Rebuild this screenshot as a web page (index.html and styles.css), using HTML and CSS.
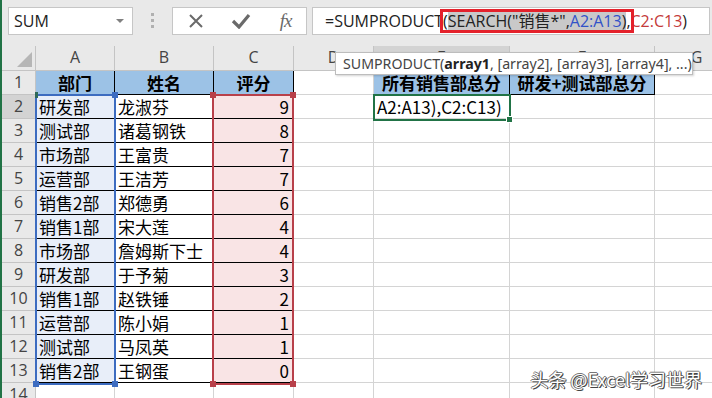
FILE: index.html
```html
<!DOCTYPE html>
<html lang="zh">
<head>
<meta charset="utf-8">
<link rel="stylesheet" href="styles.css">
</head>
<body>
<div class="app">
  <div class="fbar">
    <div class="namebox"><span>SUM</span><span class="caret"></span></div>
    <div class="grip"><i></i><i></i><i></i></div>
    <div class="btns">
      <span class="btn"><svg width="16" height="16" viewBox="0 0 16 16"><path d="M2 2 L14 14 M14 2 L2 14" stroke="#6a6a6a" stroke-width="2" fill="none"/></svg></span>
      <span class="btn"><svg width="20" height="16" viewBox="0 0 20 16"><path d="M2 8 L8 14 L18 2" stroke="#6a6a6a" stroke-width="3.2" fill="none"/></svg></span>
      <span class="btn fx">fx</span>
    </div>
    <div class="formula">=SUMPRODUCT(<span class="hl">SEARCH("销售*",<span class="ref-a">A2:A13</span>)</span>,<span class="ref-c">C2:C13</span>)</div>
  </div>

  <div class="sheet">
    <div class="c corner"><span class="tri"></span></div>
    <div class="c ch">A</div><div class="c ch">B</div><div class="c ch">C</div><div class="c ch">D</div><div class="c ch sel">E</div><div class="c ch">F</div><div class="c ch">G</div>

    <div class="c rh">1</div><div class="c hd">部门</div><div class="c hd">姓名</div><div class="c hd">评分</div><div class="c"></div><div class="c hd">所有销售部总分</div><div class="c hd">研发+测试部总分</div><div class="c"></div>

    <div class="c rh sel">2</div><div class="c a">研发部</div><div class="c b">龙淑芬</div><div class="c n">9</div><div class="c"></div><div class="c txt">A2:A13),C2:C13)</div><div class="c"></div><div class="c"></div>
    <div class="c rh">3</div><div class="c a">测试部</div><div class="c b">诸葛钢铁</div><div class="c n">8</div><div class="c"></div><div class="c"></div><div class="c"></div><div class="c"></div>
    <div class="c rh">4</div><div class="c a">市场部</div><div class="c b">王富贵</div><div class="c n">7</div><div class="c"></div><div class="c"></div><div class="c"></div><div class="c"></div>
    <div class="c rh">5</div><div class="c a">运营部</div><div class="c b">王洁芳</div><div class="c n">7</div><div class="c"></div><div class="c"></div><div class="c"></div><div class="c"></div>
    <div class="c rh">6</div><div class="c a">销售2部</div><div class="c b">郑德勇</div><div class="c n">6</div><div class="c"></div><div class="c"></div><div class="c"></div><div class="c"></div>
    <div class="c rh">7</div><div class="c a">销售1部</div><div class="c b">宋大莲</div><div class="c n">4</div><div class="c"></div><div class="c"></div><div class="c"></div><div class="c"></div>
    <div class="c rh">8</div><div class="c a">市场部</div><div class="c b">詹姆斯下士</div><div class="c n">4</div><div class="c"></div><div class="c"></div><div class="c"></div><div class="c"></div>
    <div class="c rh">9</div><div class="c a">研发部</div><div class="c b">于予菊</div><div class="c n">3</div><div class="c"></div><div class="c"></div><div class="c"></div><div class="c"></div>
    <div class="c rh">10</div><div class="c a">销售1部</div><div class="c b">赵铁锤</div><div class="c n">2</div><div class="c"></div><div class="c"></div><div class="c"></div><div class="c"></div>
    <div class="c rh">11</div><div class="c a">运营部</div><div class="c b">陈小娟</div><div class="c n">1</div><div class="c"></div><div class="c"></div><div class="c"></div><div class="c"></div>
    <div class="c rh">12</div><div class="c a">测试部</div><div class="c b">马凤英</div><div class="c n">1</div><div class="c"></div><div class="c"></div><div class="c"></div><div class="c"></div>
    <div class="c rh">13</div><div class="c a">销售2部</div><div class="c b">王钢蛋</div><div class="c n">0</div><div class="c"></div><div class="c"></div><div class="c"></div><div class="c"></div>
    <div class="c rh">14</div><div class="c"></div><div class="c"></div><div class="c"></div><div class="c"></div><div class="c"></div><div class="c"></div><div class="c"></div>

    <div class="range blue"><i class="h tl"></i><i class="h tr"></i><i class="h bl"></i><i class="h br"></i></div>
    <div class="range red"><i class="h tl"></i><i class="h tr"></i><i class="h bl"></i><i class="h br"></i></div>
    <div class="active"><i class="fill"></i></div>

    <div class="tip">SUMPRODUCT(<b>array1</b>, [array2], [array3], [array4], ...)</div>
  </div>

  <div class="wm">头条 @Excel学习世界</div>
</div>
</body>
</html>
```

FILE: styles.css
```css
body {
  margin: 0;
}

.app {
  position: relative;
  width: 712px;
  height: 398px;
  overflow: hidden;
  box-sizing: border-box;
  border-left: 2px solid #217346;
  background: #e9e9e9;
  font-family: "Noto Sans CJK SC", "Noto Sans", sans-serif;
}

/* formula bar */
.fbar {
  position: relative;
  height: 46px;
  box-sizing: border-box;
  display: flex;
  align-items: flex-start;
  padding: 7px 2px 0 6px;
}

.namebox {
  width: 125px;
  height: 28px;
  box-sizing: border-box;
  background: #fff;
  border: 1px solid #c6c6c6;
  display: flex;
  align-items: center;
  justify-content: space-between;
  padding: 0 8px 0 5px;
  font: 16px "Open Sans", sans-serif;
  color: #222;
}

.caret {
  width: 0;
  height: 0;
  border-left: 4px solid transparent;
  border-right: 4px solid transparent;
  border-top: 4px solid #808080;
}

.grip {
  width: 39px;
  display: flex;
  flex-direction: column;
  align-items: center;
  gap: 3px;
  padding-top: 6px;
}

.grip i {
  display: block;
  width: 3px;
  height: 3px;
  background: #b0b0b0;
}

.btns {
  width: 135px;
  height: 28px;
  box-sizing: border-box;
  background: #fff;
  border: 1px solid #c6c6c6;
  display: grid;
  grid-template-columns: 45px 45px 45px;
}

.btn {
  display: flex;
  align-items: center;
  justify-content: center;
}

.fx {
  font: italic 19px "Liberation Serif", serif;
  color: #6a6a6a;
  letter-spacing: -1px;
}

.formula {
  margin-left: 5px;
  flex: 1;
  height: 28px;
  box-sizing: border-box;
  background: #fff;
  border: 1px solid #c6c6c6;
  padding-left: 12px;
  font: 16px "Open Sans", "Noto Sans CJK SC", sans-serif;
  line-height: 26px;
  color: #222;
  white-space: nowrap;
}

.hl {
  position: relative;
  background: #c9c9c9;
}

.hl::after {
  content: "";
  position: absolute;
  left: -8px;
  right: -8px;
  top: -1px;
  bottom: -1px;
  border: 3px solid #e4212b;
}

.ref-a {
  color: #3152c8;
}

.ref-c {
  color: #c43a3a;
}

/* sheet */
.sheet {
  position: relative;
  display: grid;
  grid-template-columns: 34px 79px 99px 80px 80px 136px 145px 84px;
  grid-template-rows: 25px;
  grid-auto-rows: 24px;
  background: #fff;
}

.c {
  box-sizing: border-box;
  border-right: 1px solid #d4d4d4;
  border-bottom: 1px solid #d4d4d4;
  padding: 0 3px;
  font-size: 17px;
  line-height: 23px;
  white-space: nowrap;
  overflow: hidden;
  color: #000;
}

.corner {
  position: relative;
  background: #e9e9e9;
  border-color: #c4c4c4;
}

.tri {
  position: absolute;
  right: 3px;
  bottom: 3px;
  width: 0;
  height: 0;
  border-left: 15px solid transparent;
  border-bottom: 15px solid #b6b6b6;
}

.ch,
.rh {
  background: #e9e9e9;
  border-color: #c4c4c4;
  color: #444;
  text-align: center;
  font: 16px "Open Sans", sans-serif;
  line-height: 23px;
  padding: 0;
}

.ch.sel,
.rh.sel {
  background: #d3d3d3;
}

.hd {
  background: #9cc2e6;
  font-weight: bold;
  text-align: center;
  border-color: #000;
}

.a {
  background: #e8eef9;
  border-color: #000;
}

.b {
  border-color: #000;
}

.n {
  background: #f9e4e5;
  text-align: right;
  padding-right: 4px;
  border-color: #000;
}

/* range highlights (overlays) */
.range {
  position: absolute;
  top: 48px;
  height: 291px;
  box-sizing: border-box;
  border: 2px solid;
}

.range.blue {
  left: 33px;
  width: 81px;
  border-color: #3d6cc0;
  color: #3d6cc0;
}

.range.red {
  left: 210px;
  width: 82px;
  border-color: #b8404a;
  color: #b8404a;
}

.h {
  position: absolute;
  width: 6px;
  height: 6px;
  background: currentColor;
}

.tl { left: -4px; top: -4px; }
.tr { right: -4px; top: -4px; }
.bl { left: -4px; bottom: -4px; }
.br { right: -4px; bottom: -4px; }

.range.blue .tl {
  background: #2e6a58;
  width: 3px;
  left: -2px;
}

.active {
  position: absolute;
  left: 371px;
  top: 48px;
  width: 138px;
  height: 27px;
  box-sizing: border-box;
  border: 2px solid #217346;
}

.fill {
  position: absolute;
  right: -4px;
  bottom: -4px;
  width: 5px;
  height: 5px;
  background: #217346;
  border: 1px solid #fff;
}

.tip {
  position: absolute;
  left: 333px;
  top: 6px;
  width: 358px;
  height: 23px;
  box-sizing: border-box;
  background: #fff;
  border: 1px solid #bdbdbd;
  box-shadow: 1px 1px 2px rgba(0, 0, 0, 0.18);
  padding-left: 7px;
  font: 14.2px "Noto Sans", sans-serif;
  line-height: 21px;
  color: #444;
  white-space: nowrap;
  overflow: hidden;
}

.tip b {
  color: #222;
}

.wm {
  position: absolute;
  right: 10px;
  bottom: 7px;
  font-size: 18px;
  line-height: 24px;
  color: #fff;
  text-shadow: 1px 1px 0 #444, -1px 0 0 #777, 0 -1px 0 #777, 1px 0 0 #555;
}
```
